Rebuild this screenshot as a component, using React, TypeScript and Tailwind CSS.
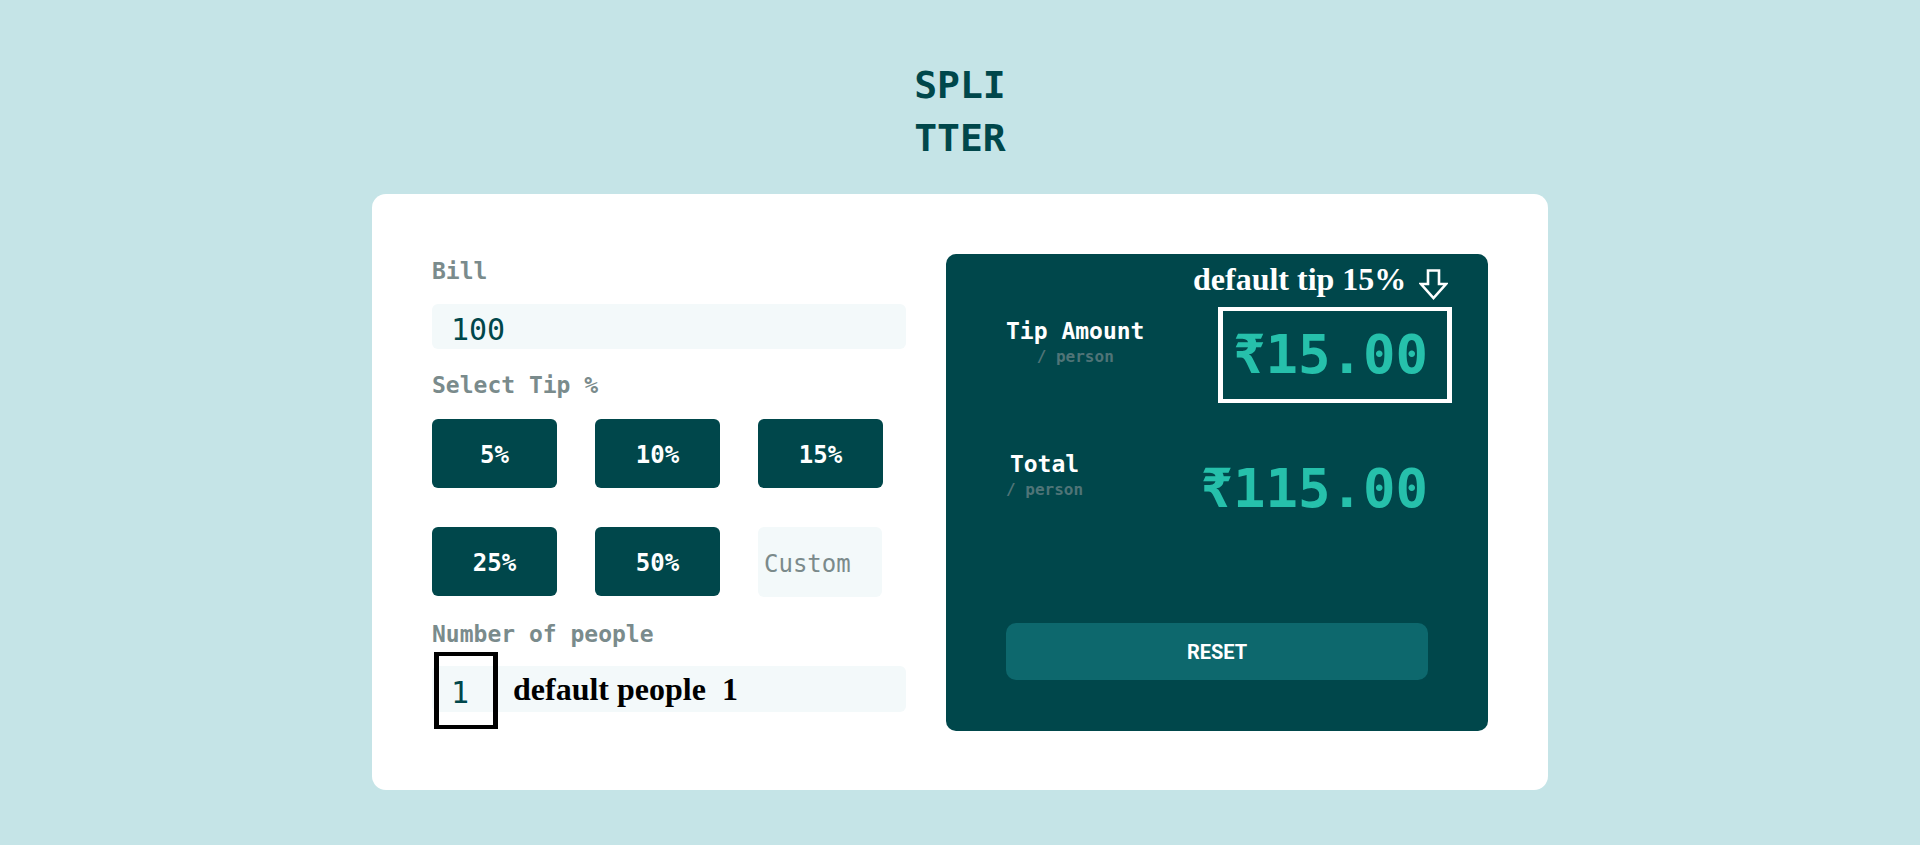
import React from "react";

const mono = { fontFamily: '"DejaVu Sans Mono", "Liberation Mono", monospace' };
const serif = { fontFamily: '"Liberation Serif", serif' };

export default function App() {
  const tips = ["5%", "10%", "15%", "25%", "50%"];
  return (
    <div
      className="min-h-[845px] w-full bg-[#c5e4e7] pt-[59px] flex flex-col items-center"
      style={mono}
    >
      <h1 className="w-[100px] break-all text-center text-[38px] leading-[53px] font-bold text-[#00474b]">
        SPLITTER
      </h1>
      <div className="mt-[29px] w-[1176px] h-[596px] bg-white rounded-[14px] flex px-[60px] pt-[60px]">
        {/* left column */}
        <div className="w-[474px] flex flex-col">
          <label className="mt-[6px] text-[23px] leading-[23px] font-bold text-[#7a8b8c]">Bill</label>
          <div className="mt-[21px] h-[45px] rounded-[6px] bg-[#f3f9fa] flex items-center pl-[19px] pt-[6px] text-[30px] text-[#00474b]">
            100
          </div>
          <label className="mt-[25px] text-[23px] leading-[23px] font-bold text-[#7a8b8c]">Select Tip %</label>
          <div className="mt-[22px] grid grid-cols-[125px_125px_125px] gap-x-[38px] gap-y-[39px]">
            {tips.map((t) => (
              <button
                key={t}
                className="h-[69px] rounded-[6px] bg-[#00474b] text-white text-[24px] font-bold flex items-center justify-center pt-[2px]"
                style={mono}
              >
                {t}
              </button>
            ))}
            <div className="h-[70px] w-[124px] rounded-[6px] bg-[#f3f9fa] flex items-center pl-[6px] pt-[3px] text-[24px] text-[#7b8a8b]">
              Custom
            </div>
          </div>
          <label className="mt-[26px] text-[23px] leading-[23px] font-bold text-[#7a8b8c]">Number of people</label>
          <div className="relative mt-[20px] h-[46px] rounded-[6px] bg-[#f3f9fa] flex items-center pl-[19px] pt-[6px] text-[30px] text-[#00474b]">
            1
            <div className="absolute left-[2px] top-[-14px] w-[64px] h-[77px] border-x-[5px] border-y-[4px] border-black" />
            <span
              className="absolute left-[81px] top-[7px] text-[32px] leading-[32px] font-bold text-black whitespace-pre"
              style={serif}
            >
              {"default people  1"}
            </span>
          </div>
        </div>
        {/* right panel */}
        <div className="relative ml-auto w-[542px] h-[477px] rounded-[10px] bg-[#00474b] px-[60px] pt-[66px] flex flex-col">
          <span
            className="absolute left-[247px] top-[9px] text-[32px] leading-[32px] font-bold text-white whitespace-pre"
            style={serif}
          >
            default tip 15%
          </span>
          <svg
            className="absolute left-[473px] top-[15px]"
            width="29"
            height="31"
            viewBox="0 0 29 31"
            fill="none"
          >
            <path
              d="M9 1.5 H20 V15 H27 L14.5 29 L2 15 H9 Z"
              stroke="white"
              strokeWidth="2.6"
              strokeLinejoin="miter"
            />
          </svg>
          <div className="absolute left-[272px] top-[53px] w-[234px] h-[96px] border-x-[5px] border-y-[4px] border-white" />

          <div className="flex items-start justify-between">
            <div className="flex flex-col items-center">
              <span className="text-[23px] leading-[23px] font-bold text-white">Tip Amount</span>
              <span className="mt-[4px] text-[16px] leading-[20px] font-bold text-[#4f7477]">/ person</span>
            </div>
            <span className="mt-[8px] text-[54px] leading-[54px] font-bold text-[#26c0ab]">₹15.00</span>
          </div>

          <div className="mt-[71px] flex items-start justify-between">
            <div className="flex flex-col items-center">
              <span className="text-[23px] leading-[23px] font-bold text-white">Total</span>
              <span className="mt-[4px] text-[16px] leading-[20px] font-bold text-[#4f7477]">/ person</span>
            </div>
            <span className="mt-[9px] text-[54px] leading-[54px] font-bold text-[#26c0ab]">₹115.00</span>
          </div>

          <button
            className="mt-[107px] h-[57px] w-full rounded-[10px] bg-[#0d686d] text-white text-[20px] font-bold"
            style={{ fontFamily: 'Roboto, "Liberation Sans", sans-serif' }}
          >
            RESET
          </button>
        </div>
      </div>
    </div>
  );
}
